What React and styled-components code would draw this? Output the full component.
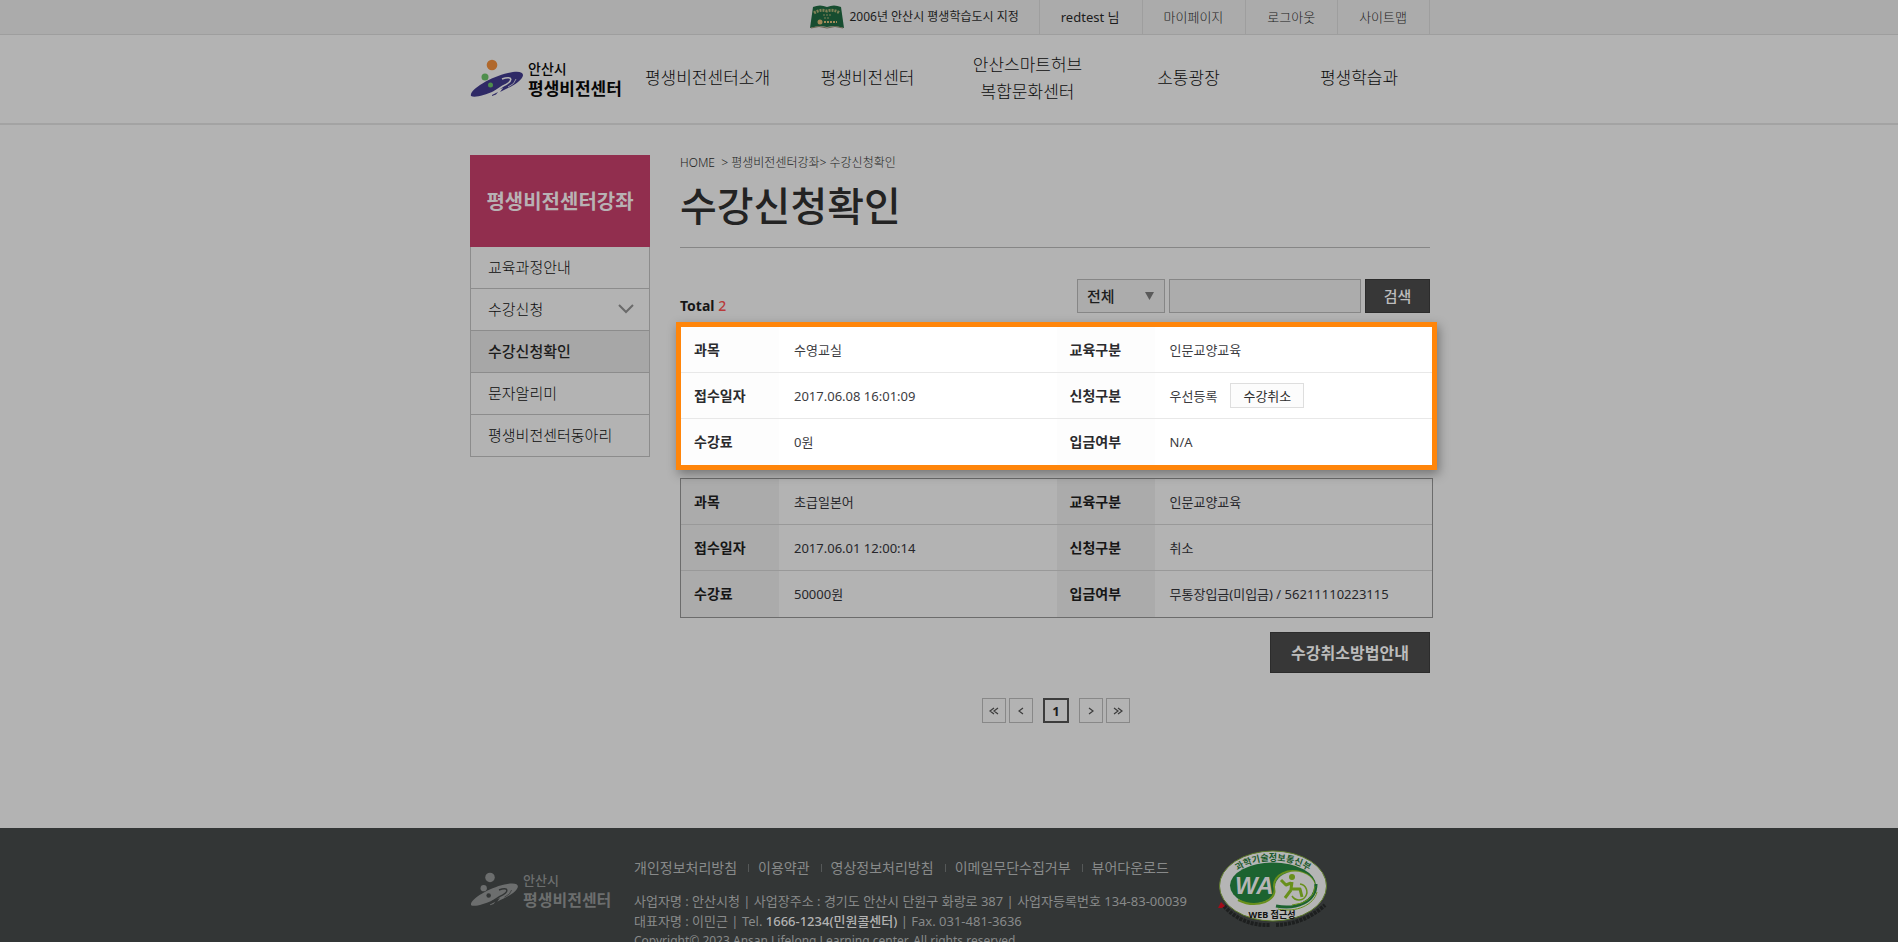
import React from "react";
import styled, { createGlobalStyle } from "styled-components";

const font = '"Noto Sans", "Noto Sans CJK KR", sans-serif';

const Global = createGlobalStyle`
  * { box-sizing: border-box; }
  body { margin: 0; background: #b3b3b3; font-family: ${font}; font-size: 13px; line-height: 20px; color: #232323; }
  a { color: inherit; text-decoration: none; }
  ul { list-style: none; margin: 0; padding: 0; }
  button, input, select { font-family: inherit; border-radius: 0; margin: 0; }
`;

const Container = styled.div`
  width: 100%;
  max-width: 962px;
  margin: 0 auto;
  padding-left: 2px;
`;

/* Utility bar */
const TopBar = styled.div`
  background: #ababab;
  border-bottom: 1px solid #9e9e9e;
`;
const TopList = styled.ul`
  display: flex;
  justify-content: flex-end;
  height: 34px;
`;
const TopItem = styled.li`
  display: flex;
  align-items: center;
  gap: 5px;
  padding: ${(p) => (p.$first ? "0 20px 0 0" : "0 22px 0 21px")};
  border-right: 1px solid #9e9e9e;
  font-size: ${(p) => (p.$first ? 12 : 13)}px;
  color: ${(p) => (p.$dark ? "#1c1c1c" : "#222")};
  font-weight: ${(p) => (p.$dark ? 400 : 300)};
  svg { width: 34px; height: 24px; }
`;

/* Header */
const Header = styled.header`
  border-bottom: 2px solid #a3a3a3;
`;
const HeaderRow = styled(Container)`
  display: flex;
  align-items: center;
  height: 88px;
`;
const Brand = styled.a`
  display: flex;
  align-items: center;
  flex: none;
  gap: 4px;
  width: ${(p) => (p.$small ? 164 : 157)}px;
  color: ${(p) => (p.$small ? "#6c6e6e" : "#060606")};
`;
const BrandText = styled.span`
  display: flex;
  flex-direction: column;
  font-weight: 500;
  font-size: ${(p) => (p.$small ? 13 : 14)}px;
  line-height: 20px;
  strong { font-weight: 700; font-size: ${(p) => (p.$small ? 16 : 17)}px; white-space: nowrap; }
`;
const Nav = styled.nav`
  display: grid;
  grid-template-columns: 161px 159px 161px 161px 180px;
  align-items: center;
  margin-right: -20px;
  padding-bottom: 3px;
`;
const NavLink = styled.a`
  font-size: 17px;
  line-height: 27px;
  font-weight: 300;
  color: #0c0c0c;
  text-align: center;
`;

/* Body */
const Main = styled(Container)`
  display: flex;
  align-items: flex-start;
  gap: 30px;
  padding-top: 30px;
  padding-bottom: 105px;
`;
const Side = styled.aside`
  flex: none;
  width: 180px;
`;
const SideTitle = styled.h2`
  display: flex;
  align-items: center;
  justify-content: center;
  height: 92px;
  margin: 0;
  padding-top: 2px;
  background: #912e4e;
  color: #b8b2b4;
  font-size: 20px;
  font-weight: 700;
`;
const SideLink = styled.a`
  display: flex;
  align-items: center;
  justify-content: space-between;
  height: 42px;
  padding: 0 15px 2px 17px;
  border: solid #8c8c8c;
  border-width: 0 1px 1px;
  font-size: 15px;
  font-weight: ${(p) => (p.$active ? 500 : 300)};
  color: ${(p) => (p.$active ? "#1c1c1c" : "#0c0c0c")};
  background: ${(p) => (p.$active ? "#a7a7a7" : "transparent")};
`;
const Content = styled.main`
  flex: 1;
  min-width: 0;
`;
const Crumbs = styled.div`
  font-size: 12px;
  line-height: 16px;
  font-weight: 300;
  color: #222;
`;
const Title = styled.h1`
  margin: 0;
  padding: 6px 0 12px;
  border-bottom: 1px solid #868686;
  font-size: 40px;
  line-height: 58px;
  font-weight: 500;
`;
const Tools = styled.form`
  display: flex;
  align-items: center;
  gap: 4px;
  margin: 31px 0 9px;
`;
const Total = styled.p`
  align-self: flex-end;
  margin: 0 auto 0 0;
  font-size: 14px;
  line-height: 14px;
  font-weight: 700;
  color: #161616;
  span { color: #b93a3a; font-weight: 500; }
`;
const SelectWrap = styled.label`
  display: grid;
  align-items: center;
  width: 88px;
  select, svg { grid-area: 1 / 1; }
  svg { justify-self: end; margin-right: 11px; pointer-events: none; }
`;
const Select = styled.select`
  appearance: none;
  width: 100%;
  height: 34px;
  padding: 0 9px;
  border: 1px solid #868686;
  background: #acacac;
  font-size: 15px;
  font-weight: 500;
  color: #1d1d1d;
`;
const SearchInput = styled.input`
  width: 192px;
  height: 34px;
  border: 1px solid #868686;
  background: #acacac;
`;
const DarkButton = styled.button`
  height: ${(p) => (p.$large ? 41 : 34)}px;
  width: ${(p) => (p.$large ? 160 : 65)}px;
  padding: 0 0 2px;
  border: 1px solid #2c2c2c;
  background: #373737;
  color: #bcbcbc;
  font-size: ${(p) => (p.$large ? 16 : 15)}px;
  font-weight: ${(p) => (p.$large ? 700 : 500)};
`;
const Highlight = styled.div`
  position: relative;
  margin: 0 -7px 8px -4px;
  border: 5px solid #ff850a;
  background: #fff;
  box-shadow: 2px 4px 10px rgba(0, 0, 0, 0.35);
`;
const Plain = styled.div`
  margin-right: -3px;
  border: 1px solid #6c6c6c;
`;
const Table = styled.table`
  width: 100%;
  table-layout: fixed;
  border-collapse: separate;
  border-spacing: 0;
  th, td {
    height: 46px;
    padding: 0 0 0 15px;
    text-align: left;
    font-size: 13px;
    font-weight: 400;
    color: ${(p) => (p.$lit ? "#3c3c3f" : "#26262a")};
    border-bottom: 1px solid ${(p) => (p.$lit ? "#e8e8e8" : "#999")};
  }
  th {
    padding-left: 13px;
    width: 98px;
    font-size: 14px;
    font-weight: 700;
    color: ${(p) => (p.$lit ? "#2b2b2d" : "#161616")};
    background: ${(p) => (p.$lit ? "#fdfdfd" : "#ababab")};
  }
  tr:last-child th, tr:last-child td { border-bottom: 0; }
`;
const CancelButton = styled.button`
  width: 74px;
  height: 25px;
  margin-left: 13px;
  padding: 0;
  border: 1px solid #dedede;
  background: #fcfcfc;
  color: #2d2d2d;
  font-size: 13px;
`;
const Actions = styled.div`
  display: flex;
  justify-content: flex-end;
  margin: 14px 0 25px;
`;
const Pager = styled.nav`
  display: flex;
  justify-content: center;
  gap: 10px;
  padding-left: 2px;
`;
const PagerGroup = styled.div`
  display: flex;
  gap: 3px;
`;
const PageLink = styled.a`
  display: flex;
  align-items: center;
  justify-content: center;
  width: ${(p) => (p.$current ? 26 : 24)}px;
  height: 25px;
  border: ${(p) => (p.$current ? "2px solid #3c3c3c" : "1px solid #888")};
  font-size: 13px;
  font-weight: 700;
  color: #1d1d1d;
`;

/* Footer */
const Footer = styled.footer`
  background: #333636;
  color: #888a8a;
`;
const FooterRow = styled(Container)`
  display: flex;
  align-items: flex-start;
  padding-top: 22px;
  ${Brand} { margin-top: 20px; }
`;
const FooterInfo = styled.div`
  flex: none;
  width: 583px;
`;
const FooterLinks = styled.ul`
  display: flex;
  align-items: center;
  height: 36px;
  font-size: 14px;
`;
const FooterLink = styled.li`
  display: flex;
  align-items: center;
  & + &::before {
    content: "";
    width: 1px;
    height: 8px;
    margin: 0 9px 0 11px;
    background: #555858;
  }
`;
const Address = styled.address`
  margin-top: 5px;
  font-style: normal;
  font-size: 13px;
  line-height: 20px;
  white-space: nowrap;
  strong { font-weight: 500; color: #b3b3b3; }
`;
const Copyright = styled.small`
  display: block;
  font-size: 12px;
  line-height: 20px;
`;
const BadgeLink = styled.a`
  line-height: 0;
`;

function Swoosh({ small }) {
  const body = small ? "#6c6e6e" : "#2f2a66";
  const bg = small ? "#333636" : "#b3b3b3";
  return (
    <svg width={small ? 49 : 54} height={small ? 36 : 40} viewBox="0 0 54 40" aria-hidden="true">
      <path
        d="M1 37C-1 31 20 18 38 14C54 10 57 16 48 23C43 27 36 30 30 33L33 29L24 32C15 36 5 39 1 37Z"
        fill={body}
      />
      <path d="M22 36L28 33L26 35.500L22 37Z" fill={body} />
      <path d="M32 20C43 16 44 22 33 27C30 29 27 31 24 33" fill="none" stroke={bg} strokeWidth="1.600" />
      <path d="M38 28Q45 25 46 20" fill="none" stroke={bg} strokeWidth="0.800" />
      <circle cx="22" cy="6" r="5.300" fill={small ? body : "#b0682c"} />
      <circle cx="15" cy="18" r="3.500" fill={small ? body : "#4e8e4c"} />
      <circle cx="20.500" cy="26" r="2.500" fill={small ? bg : "#4e8e4c"} />
    </svg>
  );
}

function Book() {
  return (
    <svg viewBox="0 0 34 24" aria-hidden="true">
      <path d="M3 2Q10 -1 17 2Q24 -1 31 2L34 23Q25 20 17 22Q9 20 0 23Z" fill="#174d30" />
      <path d="M1 23Q9 20 17 23Q25 20 33 23" fill="none" stroke="#6a6650" strokeWidth="1" />
      <path d="M4 8Q10 4 17 6Q24 4 30 8" fill="none" stroke="#7e8056" strokeWidth="3" strokeDasharray="2 1" />
      <path d="M13 10H21M14 13H20" stroke="#7e8056" strokeWidth="1" strokeDasharray="2 1" />
      <circle cx="10" cy="17" r="2.500" fill="#a08a58" />
      <path d="M14 17H27" stroke="#a08a58" strokeWidth="2" strokeDasharray="2 1" />
    </svg>
  );
}

function WebBadge() {
  return (
    <svg width="112" height="80" viewBox="5 4 112 80" role="img" aria-label="WEB 접근성">
      <defs>
        <path id="badgeArc" d="M20 30A46 28 0 0 1 102 30" />
      </defs>
      <path d="M12 60Q30 80 58 79M64 79Q92 78 113 59" fill="none" stroke="#1d1f1f" strokeWidth="4" strokeDasharray="3 1" />
      <ellipse cx="61" cy="40" rx="53.500" ry="35" fill="#b5b5b5" stroke="#5d7a2a" strokeWidth="1" />
      <ellipse cx="61" cy="39.500" rx="43" ry="23" fill="#1c6330" />
      <path d="M63 40C66 52 50 61 27 56Q44 68 66 65Q86 62 96 52L80 50Z" fill="#b5b5b5" />
      <path d="M26 54Q40 61 53 56Q65 51 62 40C62 28 76 23 88 26Q102 30 103 41" fill="none" stroke="#68901c" strokeWidth="2" />
      <ellipse cx="83" cy="41" rx="20" ry="15.500" fill="#b5b5b5" />
      <path d="M64 60C84 64 104 56 104 38" fill="none" stroke="#1c6330" strokeWidth="3" />
      <path d="M66 63C84 67 102 59 105 46M103 40Q102 57 80 59" fill="none" stroke="#68901c" strokeWidth="1" />
      <text x="23" y="48" fontFamily="Liberation Sans, sans-serif" fontSize="24" fontWeight="700" fontStyle="italic" fill="#b5b5b5">WA</text>
      <circle cx="80" cy="31" r="3" fill="#68901c" />
      <path d="M80 36L79 43H88L90 51M79 37L74 39L69 34M79 44L73 52" fill="none" stroke="#68901c" strokeWidth="3" strokeLinejoin="round" />
      <path d="M88 38A8 8 0 1 1 80 50" fill="none" stroke="#68901c" strokeWidth="1.500" />
      <text fontSize="9" fontWeight="700" fill="#1c5a2c" textAnchor="middle">
        <textPath href="#badgeArc" startOffset="50%">과학기술정보통신부</textPath>
      </text>
      <text x="60" y="72" textAnchor="middle" fontSize="9" fontWeight="700" fill="#111">WEB 접근성</text>
      <path d="M6 62L9 56L13 60L10 62Z" fill="#a00c18" />
    </svg>
  );
}

function Logo({ small }) {
  return (
    <Brand href="#" $small={small}>
      <Swoosh small={small} />
      <BrandText $small={small}>
        안산시<strong>평생비전센터</strong>
      </BrandText>
    </Brand>
  );
}

function Arrows({ d }) {
  return (
    <svg width="12" height="10" viewBox="0 0 12 10" fill="none" stroke="#3c3c3c" strokeWidth="1.200" aria-hidden="true">
      <path d={d} />
    </svg>
  );
}

function Rows({ rows, lit }) {
  return (
    <Table $lit={lit}>
      <tbody>
        {rows.map(([a, b, c, d]) => (
          <tr key={a}>
            <th scope="row">{a}</th>
            <td>{b}</td>
            <th scope="row">{c}</th>
            <td>{d}</td>
          </tr>
        ))}
      </tbody>
    </Table>
  );
}

const sideMenu = ["교육과정안내", "수강신청", "수강신청확인", "문자알리미", "평생비전센터동아리"];
const footerMenu = ["개인정보처리방침", "이용약관", "영상정보처리방침", "이메일무단수집거부", "뷰어다운로드"];

export default function App() {
  return (
    <>
      <Global />
      <TopBar>
        <Container>
          <TopList>
            <TopItem $first $dark><Book />2006년 안산시 평생학습도시 지정</TopItem>
            <TopItem $dark>redtest 님</TopItem>
            <TopItem><a href="#">마이페이지</a></TopItem>
            <TopItem><a href="#">로그아웃</a></TopItem>
            <TopItem><a href="#">사이트맵</a></TopItem>
          </TopList>
        </Container>
      </TopBar>
      <Header>
        <HeaderRow>
          <Logo />
          <Nav>
            <NavLink href="#">평생비전센터소개</NavLink>
            <NavLink href="#">평생비전센터</NavLink>
            <NavLink href="#">안산스마트허브<br />복합문화센터</NavLink>
            <NavLink href="#">소통광장</NavLink>
            <NavLink href="#">평생학습과</NavLink>
          </Nav>
        </HeaderRow>
      </Header>
      <Main>
        <Side>
          <SideTitle>평생비전센터강좌</SideTitle>
          {sideMenu.map((name, i) => (
            <SideLink key={name} href="#" $active={i === 2}>
              {name}
              {i === 1 && (
                <svg width="16" height="10" viewBox="0 0 16 10" fill="none" stroke="#6a6a6a" strokeWidth="2" aria-hidden="true">
                  <path d="M1 1L8 8L15 1" />
                </svg>
              )}
            </SideLink>
          ))}
        </Side>
        <Content>
          <Crumbs>HOME &nbsp;&gt; 평생비전센터강좌&gt; 수강신청확인</Crumbs>
          <Title>수강신청확인</Title>
          <Tools onSubmit={(e) => e.preventDefault()}>
            <Total>Total <span>2</span></Total>
            <SelectWrap>
              <Select aria-label="검색 구분"><option>전체</option></Select>
              <svg width="9" height="8" viewBox="0 0 9 8" aria-hidden="true"><path d="M0 0H9L4.500 8Z" fill="#5a5a5a" /></svg>
            </SelectWrap>
            <SearchInput type="text" aria-label="검색어" />
            <DarkButton type="submit">검색</DarkButton>
          </Tools>
          <Highlight>
            <Rows
              lit
              rows={[
                ["과목", "수영교실", "교육구분", "인문교양교육"],
                ["접수일자", "2017.06.08 16:01:09", "신청구분", <>우선등록<CancelButton type="button">수강취소</CancelButton></>],
                ["수강료", "0원", "입금여부", "N/A"],
              ]}
            />
          </Highlight>
          <Plain>
            <Rows
              rows={[
                ["과목", "초급일본어", "교육구분", "인문교양교육"],
                ["접수일자", "2017.06.01 12:00:14", "신청구분", "취소"],
                ["수강료", "50000원", "입금여부", "무통장입금(미입금) / 56211110223115"],
              ]}
            />
          </Plain>
          <Actions><DarkButton type="button" $large>수강취소방법안내</DarkButton></Actions>
          <Pager aria-label="페이지">
            <PagerGroup>
              <PageLink href="#" aria-label="처음"><Arrows d="M6 2L2 5L6 8M10 2L6 5L10 8" /></PageLink>
              <PageLink href="#" aria-label="이전"><Arrows d="M8 2L4 5L8 8" /></PageLink>
            </PagerGroup>
            <PageLink href="#" $current>1</PageLink>
            <PagerGroup>
              <PageLink href="#" aria-label="다음"><Arrows d="M4 2L8 5L4 8" /></PageLink>
              <PageLink href="#" aria-label="마지막"><Arrows d="M2 2L6 5L2 8M6 2L10 5L6 8" /></PageLink>
            </PagerGroup>
          </Pager>
        </Content>
      </Main>
      <Footer>
        <FooterRow>
          <Logo small />
          <FooterInfo>
            <FooterLinks>
              {footerMenu.map((name) => (
                <FooterLink key={name}><a href="#">{name}</a></FooterLink>
              ))}
            </FooterLinks>
            <Address>
              사업자명 : 안산시청 | 사업장주소 : 경기도 안산시 단원구 화랑로 387 | 사업자등록번호 134-83-00039<br />
              대표자명 : 이민근 | Tel. <strong>1666-1234(민원콜센터)</strong> | Fax. 031-481-3636
            </Address>
            <Copyright>Copyright© 2023 Ansan Lifelong Learning center. All rights reserved.</Copyright>
          </FooterInfo>
          <BadgeLink href="#"><WebBadge /></BadgeLink>
        </FooterRow>
      </Footer>
    </>
  );
}
